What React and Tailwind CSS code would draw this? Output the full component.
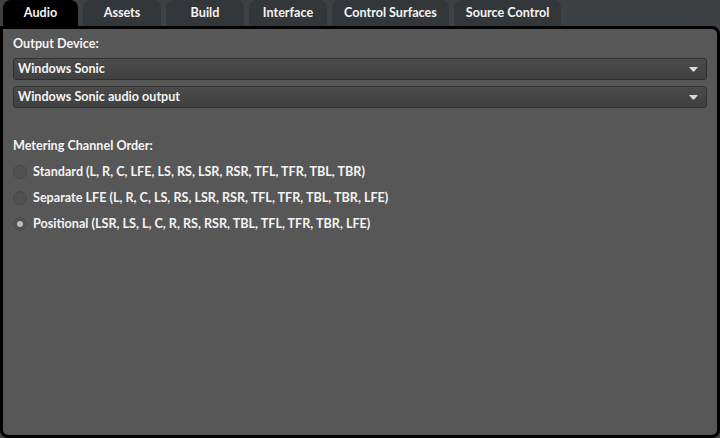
const tabs = ['Audio', 'Assets', 'Build', 'Interface', 'Control Surfaces', 'Source Control'];

const orders = [
    {label: 'Standard (L, R, C, LFE, LS, RS, LSR, RSR, TFL, TFR, TBL, TBR)', checked: false},
    {label: 'Separate LFE (L, R, C, LS, RS, LSR, RSR, TFL, TFR, TBL, TBR, LFE)', checked: false},
    {label: 'Positional (LSR, LS, L, C, R, RS, RSR, TBL, TFL, TFR, TBR, LFE)', checked: true},
];

function Select({value}) {
    return (
        <div className="flex h-[22px] items-center justify-between rounded-[3px] border border-[#2f2f2f] bg-gradient-to-b from-[#4a4a4a] to-[#404040] pl-[4px] pr-[8px] shadow-[inset_0_1px_0_#505050]">
            <span>{value}</span>
            <svg width="9" height="5" viewBox="0 0 9 5" className="fill-[#d8d8d8]">
                <path d="M0 0H9L5.2 4.6H3.8Z"/>
            </svg>
        </div>
    );
}

function Radio({label, checked}) {
    return (
        <div className="flex h-[26px] items-center gap-[6px]">
            <span className="flex h-[14px] w-[14px] items-center justify-center rounded-full border border-[#474747] bg-[#515151]">
                {checked && <span className="h-[6px] w-[6px] rounded-full bg-[#bdbdbd]"/>}
            </span>
            <span>{label}</span>
        </div>
    );
}

export default function App() {
    return (
        <div className="flex h-[438px] w-[720px] flex-col bg-[#3e4143] font-['Lato',sans-serif] text-[12.6px] font-bold text-[#f4f4f4]">
            <div className="flex h-[26px] gap-[5px] pl-[3px]">
                {tabs.map((tab, i) => (
                    <div
                        key={tab}
                        className={
                            i === 0
                                ? 'flex min-w-[75px] items-center justify-center rounded-t-[8px] bg-black px-[12px]'
                                : 'flex min-w-[78px] items-center justify-center rounded-t-[8px] bg-[#33373a] px-[12px]'
                        }
                    >
                        {tab}
                    </div>
                ))}
            </div>
            <div className="flex-1 rounded-tr-[8px] rounded-b-[8px] border-[3px] border-black bg-[#575757] px-[10px] pt-[7px]">
                <div className="leading-[15px]">Output Device:</div>
                <div className="mt-[7px] flex flex-col gap-[6px]">
                    <Select value="Windows Sonic"/>
                    <Select value="Windows Sonic audio output"/>
                </div>
                <div className="mt-[30px] leading-[15px]">Metering Channel Order:</div>
                <div className="mt-[6px] flex flex-col">
                    {orders.map((o) => (
                        <Radio key={o.label} label={o.label} checked={o.checked}/>
                    ))}
                </div>
            </div>
        </div>
    );
}
